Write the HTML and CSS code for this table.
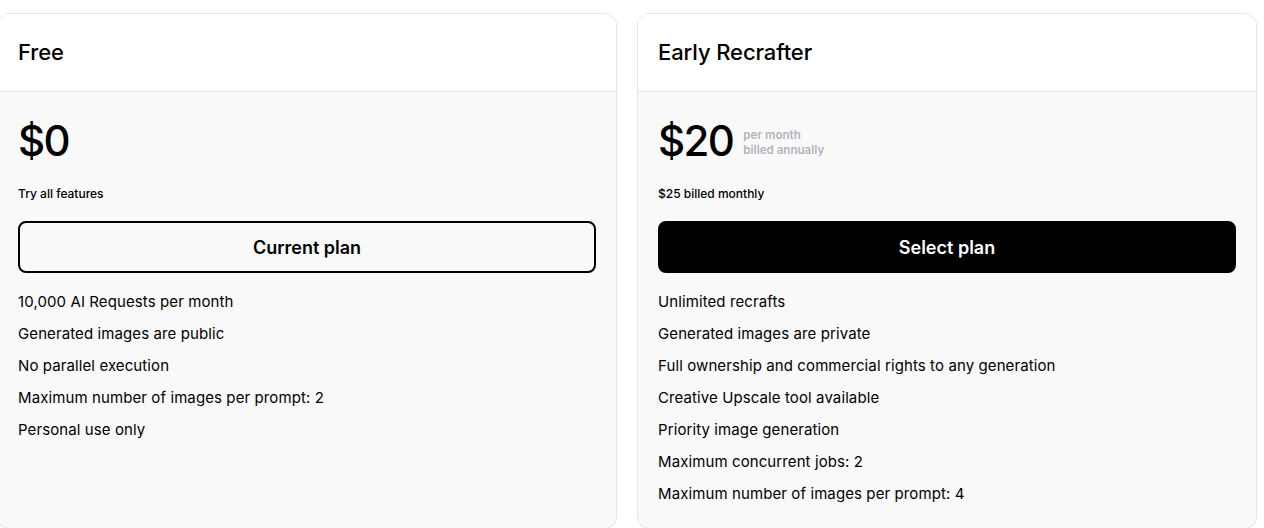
FILE: index.html
```html
<!DOCTYPE html>
<html>
<head>
<meta charset="utf-8">
<link rel="stylesheet" href="styles.css">
</head>
<body>
<div class="plans">
  <div class="card">
    <div class="card-head"><h2>Free</h2></div>
    <div class="card-body">
      <div class="price-row"><span class="price">$0</span></div>
      <div class="note">Try all features</div>
      <button class="btn btn-outline">Current plan</button>
      <ul class="features">
        <li>10,000 AI Requests per month</li>
        <li>Generated images are public</li>
        <li>No parallel execution</li>
        <li>Maximum number of images per prompt: 2</li>
        <li>Personal use only</li>
      </ul>
    </div>
  </div>
  <div class="card">
    <div class="card-head"><h2>Early Recrafter</h2></div>
    <div class="card-body">
      <div class="price-row"><span class="price">$20</span><span class="period">per month<br>billed annually</span></div>
      <div class="note">$25 billed monthly</div>
      <button class="btn btn-solid">Select plan</button>
      <ul class="features">
        <li>Unlimited recrafts</li>
        <li>Generated images are private</li>
        <li>Full ownership and commercial rights to any generation</li>
        <li>Creative Upscale tool available</li>
        <li>Priority image generation</li>
        <li>Maximum concurrent jobs: 2</li>
        <li>Maximum number of images per prompt: 4</li>
      </ul>
    </div>
  </div>
</div>
</body>
</html>
```
FILE: styles.css
```css
* { box-sizing: border-box; }
html, body { margin: 0; padding: 0; background: #fff; }
body { font-family: Inter, "Liberation Sans", sans-serif; color: #000; overflow: hidden; }
.plans {
  display: grid;
  grid-template-columns: 620px 620px;
  gap: 20px;
  margin: 13px 0 0 -3px;
  align-items: stretch;
}
.card {
  border: 1px solid #e6e6e6;
  border-radius: 12px;
  background: #f9f9f9;
  overflow: hidden;
  height: 516px;
}
.card-head {
  background: #fff;
  border-bottom: 1px solid #e6e6e6;
  padding: 23px 20px 24px 20px;
}
.card-head h2 {
  margin: 0;
  font-size: 22px;
  line-height: 30px;
  font-weight: 500;
  letter-spacing: -0.1px;
}
.card-body { padding: 19px 20px 20px 20px; }
.price-row { display: flex; align-items: center; gap: 10px; height: 60px; }
.price { font-size: 42px; font-weight: 500; letter-spacing: -1.6px; line-height: 60px; }
.period { font-size: 11.6px; font-weight: 600; color: #b3b3bb; line-height: 15px; margin-top: 4px; }
.note { font-size: 12px; font-weight: 500; margin-top: 14px; line-height: 18px; }
.btn {
  display: block;
  width: 100%;
  height: 52px;
  margin-top: 18px;
  border-radius: 8px;
  font-family: inherit;
  font-size: 18px;
  font-weight: 600;
  cursor: pointer;
}
.btn-outline { background: transparent; border: 2px solid #000; color: #000; }
.btn-solid { background: #000; border: 2px solid #000; color: #fff; }
.features { list-style: none; margin: 13px 0 0; padding: 0; }
.features li { font-size: 15px; line-height: 32px; font-weight: 400; letter-spacing: 0.1px; }
```
